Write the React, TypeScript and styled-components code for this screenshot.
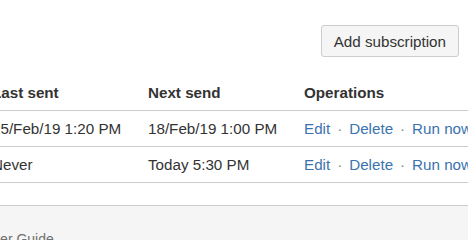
import React from "react";
import styled, { createGlobalStyle } from "styled-components";

const Global = createGlobalStyle`
  html, body { margin: 0; padding: 0; background: #fff; }
  body {
    font-family: "Liberation Sans", Arial, sans-serif;
    font-size: 15.2px;
    color: #333;
    overflow: hidden;
  }
`;

const Page = styled.div`
  width: 468px;
  height: 240px;
  overflow: hidden;
  display: flex;
  flex-direction: column;
`;

const Toolbar = styled.div`
  display: flex;
  justify-content: flex-end;
  padding: 25px 9px 0 0;
`;

const Button = styled.button`
  height: 32px;
  padding: 0 12px;
  font-family: inherit;
  font-size: 15.2px;
  color: #333;
  background: #f5f5f5;
  border: 1px solid #ccc;
  border-radius: 3px;
  cursor: pointer;
`;

const Table = styled.table`
  margin: 18px 0 0 -8px;
  border-collapse: collapse;
  table-layout: fixed;
  width: 560px;
`;

const Th = styled.th<{ $w?: number }>`
  width: ${(p) => (p.$w ? `${p.$w}px` : "auto")};
  height: 35px;
  padding: 0;
  text-align: left;
  font-weight: bold;
  vertical-align: middle;
  white-space: nowrap;
  border-bottom: 1px solid #ccc;
`;

const Td = styled.td`
  height: 35px;
  padding: 0;
  vertical-align: middle;
  white-space: nowrap;
  border-bottom: 1px solid #ccc;
`;

const Link = styled.a`
  color: #3b73af;
  text-decoration: none;
`;

const Sep = styled.span`
  display: inline-block;
  width: 19px;
  text-align: center;
  color: #888;
`;

const Footer = styled.div`
  margin-top: 22px;
  flex: 1;
  background: #f5f5f5;
  border-top: 1px solid #ccc;
  padding-top: 23px;
`;

const FooterLink = styled.span`
  display: inline-block;
  margin-left: -17px;
  font-size: 14px;
  line-height: 20px;
  color: #707070;
`;

const rows = [
  { last: "15/Feb/19 1:20 PM", next: "18/Feb/19 1:00 PM" },
  { last: "Never", next: "Today 5:30 PM" },
];

function Operations() {
  return (
    <>
      <Link href="#">Edit</Link>
      <Sep>·</Sep>
      <Link href="#">Delete</Link>
      <Sep>·</Sep>
      <Link href="#">Run now</Link>
    </>
  );
}

export default function App() {
  return (
    <Page>
      <Global />
      <Toolbar>
        <Button>Add subscription</Button>
      </Toolbar>
      <Table>
        <thead>
          <tr>
            <Th $w={156}>Last sent</Th>
            <Th $w={156}>Next send</Th>
            <Th>Operations</Th>
          </tr>
        </thead>
        <tbody>
          {rows.map((r) => (
            <tr key={r.last}>
              <Td>{r.last}</Td>
              <Td>{r.next}</Td>
              <Td>
                <Operations />
              </Td>
            </tr>
          ))}
        </tbody>
      </Table>
      <Footer>
        <FooterLink>User Guide</FooterLink>
      </Footer>
    </Page>
  );
}
